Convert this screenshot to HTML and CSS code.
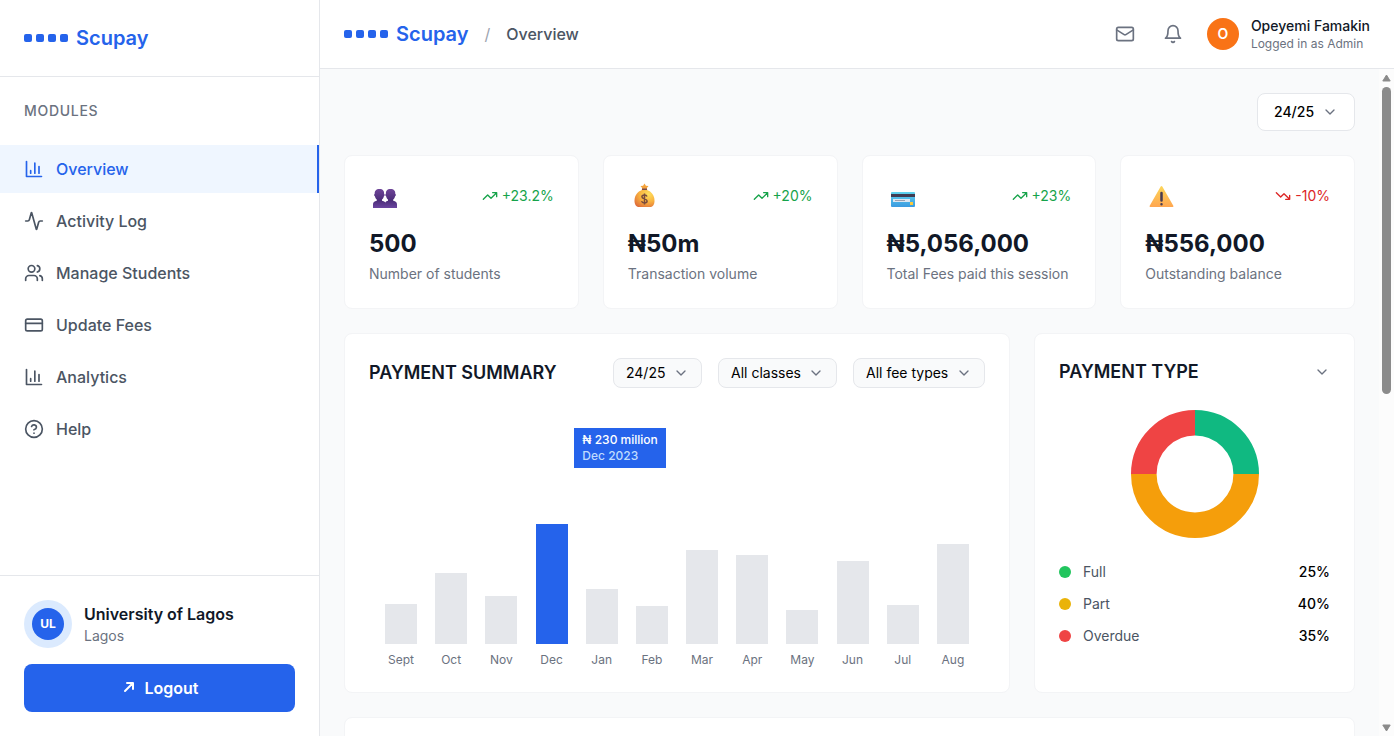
FILE: index.html
```html
<!DOCTYPE html>
<html lang="en">
<head>
<meta charset="utf-8">
<meta name="viewport" content="width=device-width, initial-scale=1">
<title>Scupay – Overview</title>
<link rel="stylesheet" href="styles.css">
</head>
<body>
<svg class="sprite" aria-hidden="true">
  <defs>
    <symbol id="i-chart" viewBox="0 0 24 24"><path d="M3 3v18h18M18 17V9M13 17V5M8 17v-3"/></symbol>
    <symbol id="i-activity" viewBox="0 0 24 24"><path d="M22 12h-2.48a2 2 0 0 0-1.93 1.46l-2.35 8.36a.25.25 0 0 1-.48 0L9.24 2.18a.25.25 0 0 0-.48 0l-2.35 8.36A2 2 0 0 1 4.49 12H2"/></symbol>
    <symbol id="i-users" viewBox="0 0 24 24"><path d="M16 21v-2a4 4 0 0 0-4-4H6a4 4 0 0 0-4 4v2M22 21v-2a4 4 0 0 0-3-3.87M16 3.13a4 4 0 0 1 0 7.75"/><circle cx="9" cy="7" r="4"/></symbol>
    <symbol id="i-card" viewBox="0 0 24 24"><rect x="2" y="5" width="20" height="14" rx="2"/><path d="M2 10h20"/></symbol>
    <symbol id="i-help" viewBox="0 0 24 24"><circle cx="12" cy="12" r="10"/><path d="M9.09 9a3 3 0 0 1 5.83 1c0 2-3 3-3 3M12 17h.01"/></symbol>
    <symbol id="i-mail" viewBox="0 0 24 24"><rect x="2" y="4" width="20" height="16" rx="2"/><path d="m22 7-8.97 5.7a1.94 1.94 0 0 1-2.06 0L2 7"/></symbol>
    <symbol id="i-bell" viewBox="0 0 24 24"><path d="M6 8a6 6 0 0 1 12 0c0 7 3 9 3 9H3s3-2 3-9M10.3 21a1.94 1.94 0 0 0 3.4 0"/></symbol>
    <symbol id="i-down" viewBox="0 0 24 24"><path d="m6 9 6 6 6-6"/></symbol>
    <symbol id="i-trend-up" viewBox="0 0 24 24"><path d="M22 7 13.5 15.5 8.5 10.5 2 17M16 7h6v6"/></symbol>
    <symbol id="i-trend-down" viewBox="0 0 24 24"><path d="M22 17 13.5 8.5 8.5 13.5 2 7M16 17h6v-6"/></symbol>
  </defs>
</svg>

<div class="app">
  <aside class="sidebar">
    <div class="sidebar-brand">
      <div class="brand"><span class="dots" aria-hidden="true"><i></i><i></i><i></i><i></i></span><span>Scupay</span></div>
    </div>
    <div class="sidebar-body">
      <h2 class="nav-title">MODULES</h2>
      <nav class="nav">
        <a class="nav-link active" href="#overview" aria-current="page"><svg class="icon"><use href="#i-chart"/></svg>Overview</a>
        <a class="nav-link" href="#activity"><svg class="icon"><use href="#i-activity"/></svg>Activity Log</a>
        <a class="nav-link" href="#students"><svg class="icon"><use href="#i-users"/></svg>Manage Students</a>
        <a class="nav-link" href="#fees"><svg class="icon"><use href="#i-card"/></svg>Update Fees</a>
        <a class="nav-link" href="#analytics"><svg class="icon"><use href="#i-chart"/></svg>Analytics</a>
        <a class="nav-link" href="#help"><svg class="icon"><use href="#i-help"/></svg>Help</a>
      </nav>
    </div>
    <div class="sidebar-foot">
      <div class="school">
        <div class="school-ring"><span class="school-badge">UL</span></div>
        <div>
          <div class="school-name">University of Lagos</div>
          <div class="school-place">Lagos</div>
        </div>
      </div>
      <button class="logout" type="button">
        <svg class="icon-sm" viewBox="0 0 16 16"><path d="M4 11 12 3M6 3h6v6"/></svg>
        Logout
      </button>
    </div>
  </aside>

  <div class="page">
    <header class="topbar">
      <div class="crumbs">
        <div class="brand"><span class="dots" aria-hidden="true"><i></i><i></i><i></i><i></i></span><span>Scupay</span></div>
        <span class="slash">/</span>
        <span class="crumb">Overview</span>
      </div>
      <div class="account">
        <div class="actions">
          <button class="icon-button" type="button" aria-label="Messages"><svg class="icon"><use href="#i-mail"/></svg></button>
          <button class="icon-button" type="button" aria-label="Notifications"><svg class="icon"><use href="#i-bell"/></svg></button>
        </div>
        <div class="user">
          <span class="avatar">O</span>
          <div>
            <div class="user-name">Opeyemi Famakin</div>
            <div class="user-role">Logged in as Admin</div>
          </div>
        </div>
      </div>
    </header>

    <div class="viewport">
      <main class="content">
        <div class="toolbar">
          <div class="select large"><select aria-label="Session"><option>24/25</option></select><svg class="icon-sm"><use href="#i-down"/></svg></div>
        </div>

        <section class="stats">
          <article class="card">
            <div class="stat-top">
              <svg class="emoji" viewBox="0 0 32 32" aria-hidden="true">
                <defs><linearGradient id="g-people" x1="0" y1="0" x2="0" y2="1"><stop offset="0" stop-color="#6f4599"/><stop offset="0.6" stop-color="#4b2d78"/><stop offset="1" stop-color="#6b45a0"/></linearGradient></defs>
                <g fill="url(#g-people)">
                  <path d="M10.500 9c-3.500 0-5 2-4.800 5-.8 0-.8 1.800.2 2.300.3 1.600 1 2.600 1.900 3.300v1.200c-2.500.4-3.800 1.400-3.800 3.700V28h13v-3.500c0-2.300-1.500-3.300-4-3.700v-1.200c.9-.7 1.600-1.700 1.900-3.300 1-.5 1-2.300.2-2.300.2-3-1.100-5-4.600-5z"/>
                  <path d="M21.500 9c-3.500 0-4.800 2-4.600 5-.8 0-.8 1.800.2 2.300.3 1.600 1 2.600 1.900 3.300v1.200c-2.500.4-3 1.400-3 3.700V28h12v-3.500c0-2.300-1.300-3.300-3.800-3.700v-1.200c.9-.7 1.600-1.700 1.900-3.300 1-.5 1-2.300.2-2.300.2-3-1.300-5-4.800-5z"/>
                </g>
              </svg>
              <span class="trend up"><svg class="icon-sm"><use href="#i-trend-up"/></svg>+23.2%</span>
            </div>
            <div class="stat-value">500</div>
            <div class="stat-label">Number of students</div>
          </article>
          <article class="card">
            <div class="stat-top">
              <svg class="emoji" viewBox="0 0 32 32" aria-hidden="true">
                <defs><radialGradient id="g-bag" cx="0.7" cy="0.25" r="0.9"><stop offset="0" stop-color="#ffdf5c"/><stop offset="0.5" stop-color="#f9b23f"/><stop offset="1" stop-color="#dd6b3a"/></radialGradient></defs>
                <path fill="#f5a33c" d="m16.500 3.500 1.400 2.200 2.600.2-1.600 2 .3 2.100h-5.400l.3-2.100-1.600-2 2.600-.2z"/>
                <path fill="url(#g-bag)" d="M14 10h5c4.500 1.500 7.500 5.500 7.500 10.500 0 4-1.500 6.500-4.500 6.500H11c-3 0-4.500-2.500-4.500-6.500C6.500 15.500 9.500 11.500 14 10z"/>
                <path fill="#7a4b4c" d="M14 8.500h5V10h-5z"/>
                <path fill="none" stroke="#7a4b3c" stroke-width="1.500" d="M19 16.500c-.4-1.200-1.400-1.600-2.600-1.600-1.500 0-2.500.8-2.500 1.900 0 2.800 5.200 1.400 5.200 4.200 0 1.300-1.200 2-2.700 2s-2.500-.7-2.800-1.900M16.500 13.500v11"/>
              </svg>
              <span class="trend up"><svg class="icon-sm"><use href="#i-trend-up"/></svg>+20%</span>
            </div>
            <div class="stat-value">₦50m</div>
            <div class="stat-label">Transaction volume</div>
          </article>
          <article class="card">
            <div class="stat-top">
              <svg class="emoji" viewBox="0 0 32 32" aria-hidden="true">
                <defs><linearGradient id="g-card" x1="0" y1="0" x2="0" y2="1"><stop offset="0" stop-color="#5fd3ee"/><stop offset="1" stop-color="#3a9ae0"/></linearGradient></defs>
                <rect x="4" y="12" width="24" height="15" rx="1" fill="url(#g-card)"/>
                <path fill="#403b52" d="M4 14h24v3H4z"/>
                <path fill="#dce6f2" d="M6 19h17v3H6z"/>
                <path stroke="#9a9fb0" d="M8 20.500h10"/>
                <rect x="23" y="22" width="3" height="3" fill="#fcc93c"/>
              </svg>
              <span class="trend up"><svg class="icon-sm"><use href="#i-trend-up"/></svg>+23%</span>
            </div>
            <div class="stat-value">₦5,056,000</div>
            <div class="stat-label">Total Fees paid this session</div>
          </article>
          <article class="card">
            <div class="stat-top">
              <svg class="emoji" viewBox="0 0 32 32" aria-hidden="true">
                <defs><linearGradient id="g-warn" x1="0" y1="0" x2="0" y2="1"><stop offset="0" stop-color="#fcd65a"/><stop offset="1" stop-color="#ffa64f"/></linearGradient></defs>
                <path fill="url(#g-warn)" d="M15.700 6.500c.4-.7 1.200-.7 1.600 0L28.300 25.800c.4.700.1 1.200-.6 1.200H5.300c-.7 0-1-.5-.6-1.200z"/>
                <path stroke="#483b50" stroke-width="2.500" stroke-linecap="round" d="M16.500 13v7.500M16.500 24.200v.1"/>
              </svg>
              <span class="trend down"><svg class="icon-sm"><use href="#i-trend-down"/></svg>-10%</span>
            </div>
            <div class="stat-value">₦556,000</div>
            <div class="stat-label">Outstanding balance</div>
          </article>
        </section>

        <section class="panels">
          <article class="card summary">
            <div class="panel-head">
              <h2 class="panel-title">PAYMENT SUMMARY</h2>
              <div class="filters">
                <div class="select"><select aria-label="Summary session"><option>24/25</option></select><svg class="icon-sm"><use href="#i-down"/></svg></div>
                <div class="select"><select aria-label="Class"><option>All classes</option></select><svg class="icon-sm"><use href="#i-down"/></svg></div>
                <div class="select"><select aria-label="Fee type"><option>All fee types</option></select><svg class="icon-sm"><use href="#i-down"/></svg></div>
              </div>
            </div>
            <div class="chart">
              <div class="tooltip"><div>₦ 230 million</div><div class="tooltip-date">Dec 2023</div></div>
              <div class="column"><span class="bar" style="height:40px"></span>Sept</div>
              <div class="column"><span class="bar" style="height:71px"></span>Oct</div>
              <div class="column"><span class="bar" style="height:48px"></span>Nov</div>
              <div class="column"><span class="bar current" style="height:120px"></span>Dec</div>
              <div class="column"><span class="bar" style="height:55px"></span>Jan</div>
              <div class="column"><span class="bar" style="height:38px"></span>Feb</div>
              <div class="column"><span class="bar" style="height:94px"></span>Mar</div>
              <div class="column"><span class="bar" style="height:89px"></span>Apr</div>
              <div class="column"><span class="bar" style="height:34px"></span>May</div>
              <div class="column"><span class="bar" style="height:83px"></span>Jun</div>
              <div class="column"><span class="bar" style="height:39px"></span>Jul</div>
              <div class="column"><span class="bar" style="height:100px"></span>Aug</div>
            </div>
          </article>

          <article class="card type">
            <div class="panel-head">
              <h2 class="panel-title">PAYMENT TYPE</h2>
              <button class="icon-button" type="button" aria-label="Payment type options"><svg class="icon-sm"><use href="#i-down"/></svg></button>
            </div>
            <svg class="donut" viewBox="0 0 100 100" role="img" aria-label="Payment type shares">
              <path stroke="#10b981" d="M50 10A40 40 0 0 1 90 50"/>
              <path stroke="#f59e0b" d="M90 50A40 40 0 0 1 10 50"/>
              <path stroke="#ef4444" d="M10 50A40 40 0 0 1 50 10"/>
            </svg>
            <ul class="legend">
              <li><span class="dot full"></span>Full<strong>25%</strong></li>
              <li><span class="dot part"></span>Part<strong>40%</strong></li>
              <li><span class="dot overdue"></span>Overdue<strong>35%</strong></li>
            </ul>
          </article>
        </section>

        <section class="card next"></section>
      </main>

      <div class="rail" aria-hidden="true">
        <svg class="rail-arrow" viewBox="0 0 9 8"><path d="M4.500 1 8.200 7H.8z"/></svg>
        <div class="rail-track"><div class="rail-thumb"></div></div>
        <svg class="rail-arrow" viewBox="0 0 9 8"><path d="M4.500 7 8.200 1H.8z"/></svg>
      </div>
    </div>
  </div>
</div>
</body>
</html>
```
FILE: styles.css
```css
*,
*::before,
*::after {
  box-sizing: border-box;
}

body,
h2,
ul {
  margin: 0;
  padding: 0;
}

body {
  font-family: Inter, "Liberation Sans", sans-serif;
  font-size: 16px;
  line-height: 24px;
  color: #000;
  background: #f9fafb;
}

button,
select {
  font: inherit;
  color: inherit;
  cursor: pointer;
}

.sprite {
  position: absolute;
  width: 0;
  height: 0;
}

.icon,
.icon-sm {
  display: block;
  flex: none;
  fill: none;
  stroke: currentColor;
  stroke-width: 2;
  stroke-linecap: round;
  stroke-linejoin: round;
}

.icon {
  width: 20px;
  height: 20px;
}

.icon-sm {
  width: 16px;
  height: 16px;
}

.app {
  display: flex;
  height: 100vh;
}

/* Brand */
.brand {
  display: flex;
  align-items: center;
  gap: 8px;
  font-size: 20px;
  line-height: 28px;
  font-weight: 600;
  color: #2563eb;
}

.dots {
  display: flex;
  gap: 4px;
}

.dots i {
  width: 8px;
  height: 8px;
  border-radius: 2px;
  background: #2563eb;
}

/* Sidebar */
.sidebar {
  display: flex;
  flex-direction: column;
  flex: none;
  width: 320px;
  background: #fff;
  border-right: 1px solid #e5e7eb;
}

.sidebar-brand {
  padding: 24px;
  border-bottom: 1px solid #e5e7eb;
}

.sidebar-body {
  flex: 1;
  padding: 24px 0;
}

.nav-title {
  padding: 0 24px;
  margin-bottom: 24px;
  font-size: 14px;
  line-height: 20px;
  font-weight: 500;
  letter-spacing: 0.05em;
  color: #6b7280;
}

.nav {
  display: flex;
  flex-direction: column;
  gap: 4px;
}

.nav-link {
  display: flex;
  align-items: center;
  gap: 12px;
  padding: 12px 24px;
  font-weight: 500;
  color: #4b5563;
  text-decoration: none;
}

.nav-link.active {
  color: #2563eb;
  background: #eff6ff;
  border-right: 2px solid #2563eb;
}

.sidebar-foot {
  display: flex;
  flex-direction: column;
  gap: 16px;
  padding: 24px;
  border-top: 1px solid #e5e7eb;
}

.school {
  display: flex;
  align-items: center;
  gap: 12px;
}

.school-ring {
  display: flex;
  padding: 8px;
  border-radius: 50%;
  background: #dbeafe;
}

.school-badge {
  display: grid;
  place-items: center;
  width: 32px;
  height: 32px;
  border-radius: 50%;
  font-size: 12px;
  font-weight: 700;
  color: #fff;
  background: #2563eb;
}

.school-name {
  font-weight: 600;
  color: #111827;
}

.school-place {
  font-size: 14px;
  line-height: 20px;
  color: #6b7280;
}

.logout {
  display: flex;
  align-items: center;
  justify-content: center;
  gap: 8px;
  padding: 12px 16px;
  border: 0;
  border-radius: 8px;
  font-weight: 600;
  color: #fff;
  background: #2563eb;
}

/* Top bar */
.page {
  display: flex;
  flex-direction: column;
  flex: 1;
  min-width: 0;
}

.topbar {
  display: flex;
  align-items: center;
  justify-content: space-between;
  padding: 16px 24px;
  background: #fff;
  border-bottom: 1px solid #e5e7eb;
}

.crumbs {
  display: flex;
  align-items: center;
  gap: 16px;
}

.slash {
  color: #9ca3af;
}

.crumb {
  font-weight: 500;
  color: #4b5563;
}

.account {
  display: flex;
  align-items: center;
  gap: 24px;
}

.actions {
  display: flex;
  gap: 28px;
}

.icon-button {
  padding: 0;
  border: 0;
  color: #6b7280;
  background: none;
}

.user {
  display: flex;
  align-items: center;
  gap: 12px;
}

.avatar {
  display: grid;
  place-items: center;
  width: 32px;
  height: 32px;
  border-radius: 50%;
  font-size: 14px;
  font-weight: 600;
  color: #fff;
  background: #f97316;
}

.user-name {
  font-size: 14px;
  line-height: 20px;
  font-weight: 500;
  color: #111827;
}

.user-role {
  font-size: 12px;
  line-height: 16px;
  color: #6b7280;
}

/* Scrolling area */
.viewport {
  display: flex;
  flex: 1;
  min-height: 0;
}

.content {
  display: flex;
  flex-direction: column;
  gap: 24px;
  flex: 1;
  min-width: 0;
  padding: 24px;
  overflow-y: auto;
  scrollbar-width: none;
}

.rail {
  display: flex;
  flex-direction: column;
  align-items: center;
  flex: none;
  gap: 5px;
  width: 15px;
  padding: 5px 0 4px;
  background: #fcfcfc;
}

.rail-arrow {
  width: 9px;
  height: 8px;
  fill: #8b8b8b;
  stroke: #8b8b8b;
  stroke-linejoin: round;
}

.rail-track {
  flex: 1;
}

.rail-thumb {
  width: 9px;
  height: 48.5%;
  border-radius: 5px;
  background: #8b8b8b;
}

.toolbar {
  display: flex;
  justify-content: flex-end;
}

.select {
  position: relative;
  display: flex;
}

.select select {
  appearance: none;
  margin: 0;
  padding: 4px 35px 4px 12px;
  border: 1px solid #e5e7eb;
  border-radius: 8px;
  font-size: 14px;
  line-height: 20px;
  background: #f9fafb;
}

.select .icon-sm {
  position: absolute;
  top: 50%;
  right: 13px;
  margin-top: -8px;
  color: #6b7280;
  pointer-events: none;
}

.select.large select {
  padding: 8px 39px 8px 16px;
  font-weight: 500;
  background: #fff;
}

.select.large .icon-sm {
  right: 17px;
}

.card {
  padding: 24px;
  border: 1px solid #f3f4f6;
  border-radius: 8px;
  background: #fff;
}

/* Stats */
.stats {
  display: grid;
  grid-template-columns: repeat(4, minmax(0, 1fr));
  gap: 24px;
}

.stat-top {
  display: flex;
  align-items: center;
  justify-content: space-between;
  margin-bottom: 16px;
}

.emoji {
  width: 32px;
  height: 32px;
}

.trend {
  display: flex;
  align-items: center;
  gap: 4px;
  font-size: 14px;
  line-height: 20px;
}

.trend.up {
  color: #16a34a;
}

.trend.down {
  color: #dc2626;
}

.stat-value {
  margin-bottom: 4px;
  font-size: 24px;
  line-height: 32px;
  font-weight: 700;
  color: #111827;
}

.stat-label {
  font-size: 14px;
  line-height: 20px;
  color: #6b7280;
}

/* Panels */
.panels {
  display: grid;
  grid-template-columns: repeat(3, minmax(0, 1fr));
  gap: 24px;
}

.summary {
  grid-column: span 2;
}

.panel-head {
  display: flex;
  align-items: center;
  justify-content: space-between;
  margin-bottom: 24px;
}

.panel-title {
  font-size: 18px;
  line-height: 28px;
  font-weight: 600;
  color: #111827;
}

.filters {
  display: flex;
  gap: 16px;
}

.chart {
  position: relative;
  display: flex;
  align-items: flex-end;
  justify-content: space-between;
  height: 256px;
  padding: 0 16px;
}

.column {
  display: flex;
  flex-direction: column;
  align-items: center;
  gap: 8px;
  width: 32px;
  font-size: 12px;
  line-height: 16px;
  color: #6b7280;
}

.bar {
  width: 32px;
  background: #e5e7eb;
}

.bar.current {
  background: #2563eb;
}

.tooltip {
  position: absolute;
  top: 16px;
  left: calc(100% / 3);
  padding: 4px 8px;
  font-size: 12px;
  line-height: 16px;
  font-weight: 500;
  color: #fff;
  background: #2563eb;
}

.tooltip-date {
  color: #bfdbfe;
}

.donut {
  display: block;
  width: 128px;
  height: 128px;
  margin: 0 auto 24px;
  fill: none;
  stroke-width: 20;
}

.legend {
  display: flex;
  flex-direction: column;
  gap: 12px;
  list-style: none;
  font-size: 14px;
  line-height: 20px;
  color: #4b5563;
}

.legend li {
  display: flex;
  align-items: center;
  gap: 12px;
}

.legend strong {
  margin-left: auto;
  font-weight: 500;
  color: #000;
}

.dot {
  width: 12px;
  height: 12px;
  border-radius: 50%;
}

.dot.full {
  background: #22c55e;
}

.dot.part {
  background: #eab308;
}

.dot.overdue {
  background: #ef4444;
}

.next {
  flex: none;
  min-height: 320px;
}
```
